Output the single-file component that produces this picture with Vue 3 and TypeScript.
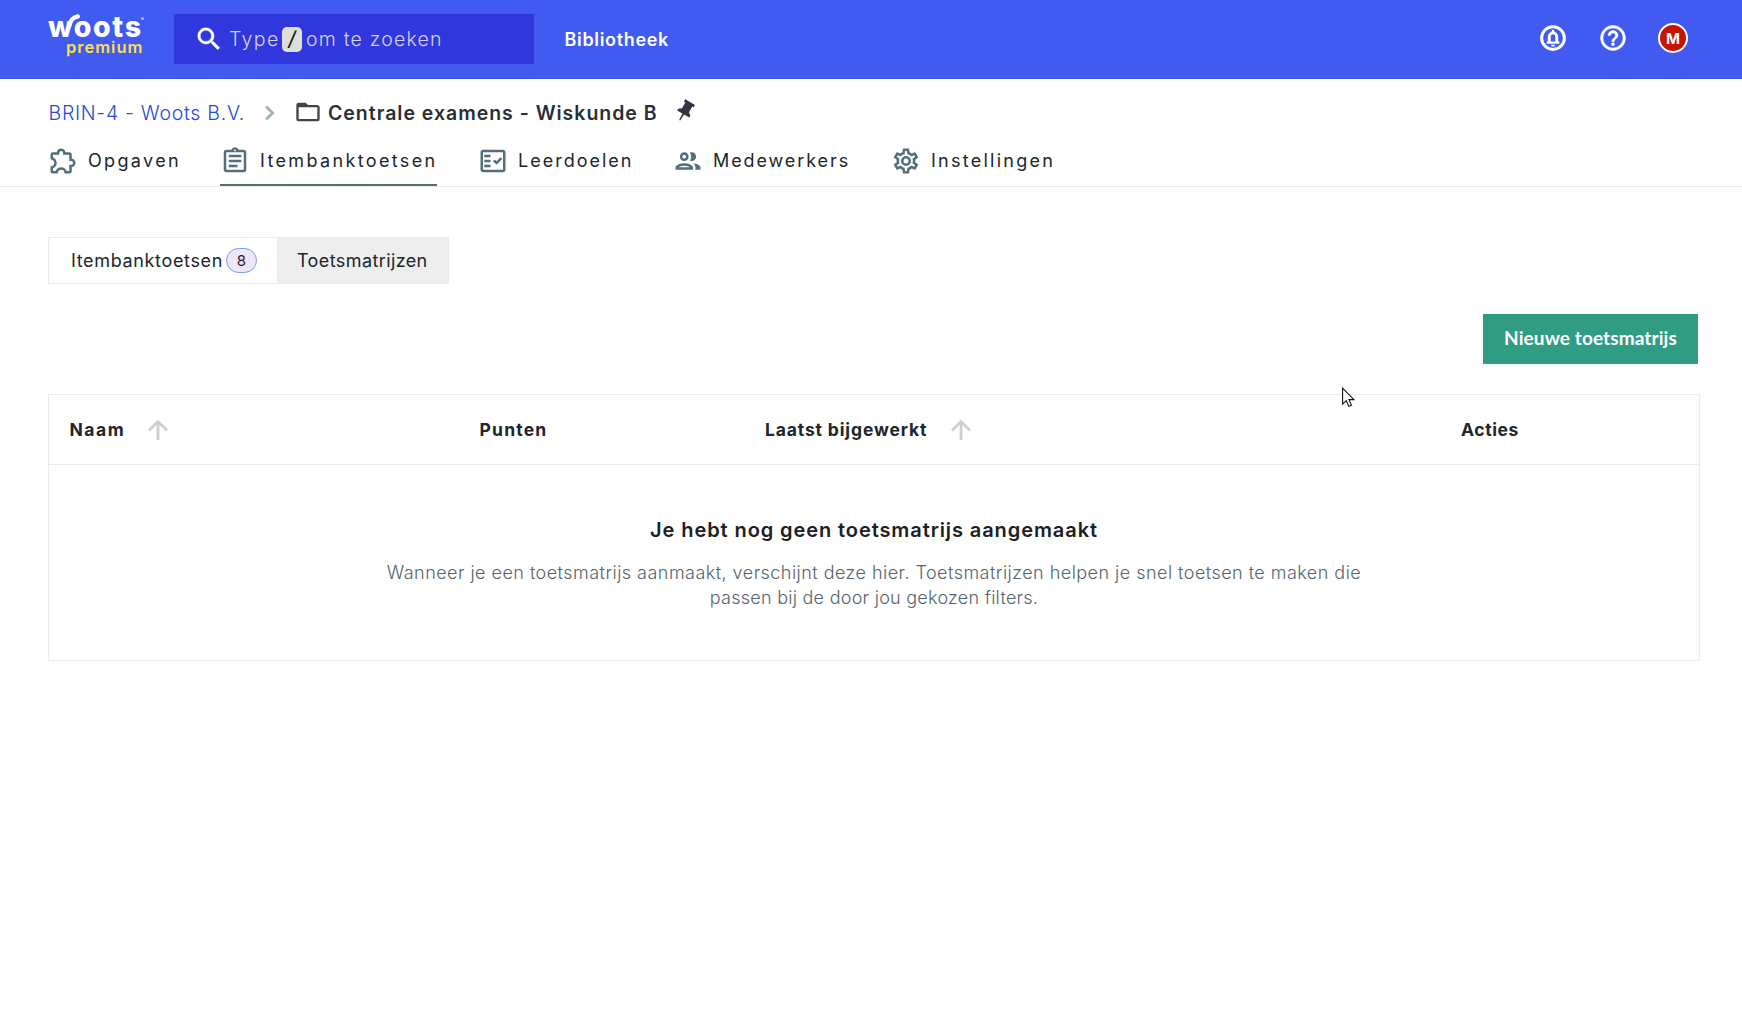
<script setup lang="ts">
interface Tab {
  label: string
  icon: string
  width: number
  spacing: number
  active?: boolean
}

const icons = {
  puzzle: 'M22,13.5C22,15.26 20.7,16.72 19,16.96V20A2,2 0 0,1 17,22H13.2V21.7A2.7,2.7 0 0,0 10.5,19C9,19 7.8,20.21 7.8,21.7V22H4A2,2 0 0,1 2,20V16.2H2.3C3.79,16.2 5,15 5,13.5C5,12 3.79,10.8 2.3,10.8H2V7A2,2 0 0,1 4,5H7.04C7.28,3.3 8.74,2 10.5,2C12.26,2 13.72,3.3 13.96,5H17A2,2 0 0,1 19,7V10.04C20.7,10.28 22,11.74 22,13.5M17,15H18.5A1.5,1.5 0 0,0 20,13.5A1.5,1.5 0 0,0 18.5,12H17V7H12V5.5A1.5,1.5 0 0,0 10.5,4A1.5,1.5 0 0,0 9,5.5V7H4V9.12C5.76,9.8 7,11.5 7,13.5C7,15.5 5.75,17.2 4,17.88V20H6.12C6.8,18.25 8.5,17 10.5,17C12.5,17 14.2,18.25 14.88,20H17V15Z',
  clipboard: 'M7 15h7v2H7zm0-4h10v2H7zm0-4h10v2H7zm12-4h-4.18C14.4 1.84 13.3 1 12 1s-2.4.84-2.82 2H5c-1.1 0-2 .9-2 2v14c0 1.1.9 2 2 2h14c1.1 0 2-.9 2-2V5c0-1.1-.9-2-2-2zm-7-.25c.41 0 .75.34.75.75s-.34.75-.75.75-.75-.34-.75-.75.34-.75.75-.75zM19 19H5V5h14v14z',
  factCheck: 'M20 3H4c-1.1 0-2 .9-2 2v14c0 1.1.9 2 2 2h16c1.1 0 2-.9 2-2V5c0-1.1-.9-2-2-2zm0 16H4V5h16v14zM19.41 10.42L17.99 9l-3.17 3.17-1.41-1.42L12 12.16 14.82 15zM5 7h5v2H5zm0 4h5v2H5zm0 4h5v2H5z',
  people: 'M9 13.75c-2.34 0-7 1.17-7 3.5V19h14v-1.75c0-2.33-4.66-3.5-7-3.5zM4.34 17c.84-.58 2.87-1.25 4.66-1.25s3.82.67 4.66 1.25H4.34zM9 12c1.93 0 3.5-1.57 3.5-3.5S10.93 5 9 5 5.5 6.57 5.5 8.5 7.07 12 9 12zm0-5c.83 0 1.5.67 1.5 1.5S9.83 10 9 10s-1.5-.67-1.5-1.5S8.17 7 9 7zm7.04 6.81c1.16.84 1.96 1.96 1.96 3.44V19h4v-1.75c0-2.02-3.5-3.17-5.96-3.44zM15 12c1.93 0 3.5-1.57 3.5-3.5S16.93 5 15 5c-.54 0-1.04.13-1.5.35.63.89 1 1.98 1 3.15s-.37 2.26-1 3.15c.46.22.96.35 1.5.35z',
  cog: 'M12,8A4,4 0 0,1 16,12A4,4 0 0,1 12,16A4,4 0 0,1 8,12A4,4 0 0,1 12,8M12,10A2,2 0 0,0 10,12A2,2 0 0,0 12,14A2,2 0 0,0 14,12A2,2 0 0,0 12,10M10,22C9.75,22 9.54,21.82 9.5,21.58L9.13,18.93C8.5,18.68 7.96,18.34 7.44,17.94L4.95,18.95C4.73,19.03 4.46,18.95 4.34,18.73L2.34,15.27C2.21,15.05 2.27,14.78 2.46,14.63L4.57,12.97L4.5,12L4.57,11L2.46,9.37C2.27,9.22 2.21,8.95 2.34,8.73L4.34,5.27C4.46,5.05 4.73,4.96 4.95,5.05L7.44,6.05C7.96,5.66 8.5,5.32 9.13,5.07L9.5,2.42C9.54,2.18 9.75,2 10,2H14C14.25,2 14.46,2.18 14.5,2.42L14.87,5.07C15.5,5.32 16.04,5.66 16.56,6.05L19.05,5.05C19.27,4.96 19.54,5.05 19.66,5.27L21.66,8.73C21.79,8.95 21.73,9.22 21.54,9.37L19.43,11L19.5,12L19.43,13L21.54,14.63C21.73,14.78 21.79,15.05 21.66,15.27L19.66,18.73C19.54,18.95 19.27,19.04 19.05,18.95L16.56,17.95C16.04,18.34 15.5,18.68 14.87,18.93L14.5,21.58C14.46,21.82 14.25,22 14,22H10M11.25,4L10.88,6.61C9.68,6.86 8.62,7.5 7.85,8.39L5.44,7.35L4.69,8.65L6.8,10.2C6.4,11.37 6.4,12.64 6.8,13.8L4.68,15.36L5.43,16.66L7.86,15.62C8.63,16.5 9.68,17.14 10.87,17.38L11.24,20H12.76L13.13,17.39C14.32,17.14 15.37,16.5 16.14,15.62L18.57,16.66L19.32,15.36L17.2,13.81C17.6,12.64 17.6,11.37 17.2,10.2L19.31,8.65L18.56,7.35L16.15,8.39C15.38,7.5 14.32,6.86 13.12,6.62L12.75,4H11.25Z',
}

const tabs: Tab[] = [
  { label: 'Opgaven', icon: icons.puzzle, width: 131, spacing: 2.35 },
  { label: 'Itembanktoetsen', icon: icons.clipboard, width: 217, spacing: 2.35, active: true },
  { label: 'Leerdoelen', icon: icons.factCheck, width: 154, spacing: 2.0 },
  { label: 'Medewerkers', icon: icons.people, width: 177, spacing: 1.9 },
  { label: 'Instellingen', icon: icons.cog, width: 164, spacing: 2.25 },
]

const columns = [
  { label: 'Naam', sortable: true, spacing: 1.5 },
  { label: 'Punten', sortable: false, spacing: 1.2 },
  { label: 'Laatst bijgewerkt', sortable: true, spacing: 0.86 },
  { label: 'Acties', sortable: false, spacing: 0.6 },
]
</script>

<template>
  <div class="page">
    <header class="topbar">
      <div class="logo">
        <div class="logo-name">woots<svg class="swash" viewBox="0 0 12 12"><path d="M2 11 C3.5 5.5 5 3.4 10 2.2" fill="none" stroke="#fff" stroke-width="4" stroke-linecap="round" /></svg><i class="reg"></i></div>
        <div class="logo-plan">premium</div>
      </div>
      <div class="search">
        <svg class="icon" viewBox="0 0 24 24"><path stroke="currentColor" stroke-width=".4" d="M9.5,3A6.5,6.5 0 0,1 16,9.5C16,11.11 15.41,12.59 14.44,13.73L14.71,14H15.5L20.5,19L19,20.5L14,15.5V14.71L13.73,14.44C12.59,15.41 11.11,16 9.5,16A6.5,6.5 0 0,1 3,9.5A6.5,6.5 0 0,1 9.5,3M9.5,5C7,5 5,7 5,9.5C5,12 7,14 9.5,14C12,14 14,12 14,9.5C14,7 12,5 9.5,5Z" /></svg>
        <span class="type">Type</span><kbd>/</kbd><span class="rest">om te zoeken</span>
      </div>
      <a class="library">Bibliotheek</a>
      <div class="actions">
        <svg class="icon" viewBox="0 0 24 24"><circle cx="12" cy="12" r="9.1" fill="none" stroke="currentColor" stroke-width="2.4" /><path d="M12 18.9a1.6 1.6 0 0 0 1.6-1.5h-3.2a1.6 1.6 0 0 0 1.6 1.5zM16.2 14.8v-3.6c0-2-1.2-3.7-3.1-4.2v-.5a1.1 1.1 0 0 0-2.2 0v.5c-1.9.5-3.1 2.2-3.1 4.2v3.6H6.9v1.8h10.2v-1.8zm-2.4 0h-3.6v-3.6c0-1.3.6-2.3 1.8-2.3s1.8 1 1.8 2.3z" /></svg>
        <svg class="icon" viewBox="0 0 24 24"><path stroke="currentColor" stroke-width=".4" d="M11,18H13V16H11V18M12,2A10,10 0 0,0 2,12A10,10 0 0,0 12,22A10,10 0 0,0 22,12A10,10 0 0,0 12,2M12,20C7.59,20 4,16.41 4,12C4,7.59 7.59,4 12,4C16.41,4 20,7.59 20,12C20,16.41 16.41,20 12,20M12,6A4,4 0 0,0 8,10H10A2,2 0 0,1 12,8A2,2 0 0,1 14,10C14,12 11,11.75 11,15H13C13,12.75 16,12.5 16,10A4,4 0 0,0 12,6Z" /></svg>
        <span class="avatar">M</span>
      </div>
    </header>

    <nav class="subheader">
      <div class="crumbs">
        <a class="crumb-link">BRIN-4 - Woots B.V.</a>
        <svg class="chevron" viewBox="0 0 12 16"><path d="M2 1.5 L8.6 8 L2 14.5" fill="none" stroke="#9fb1b9" stroke-width="2.7" /></svg>
        <svg class="folder" viewBox="0 0 24 24"><path d="M20,18H4V8H20M20,6H12L10,4H4C2.89,4 2,4.89 2,6V18A2,2 0 0,0 4,20H20A2,2 0 0,0 22,18V8C22,6.89 21.1,6 20,6Z" /></svg>
        <span class="crumb-title">Centrale examens - Wiskunde B</span>
        <svg class="pin" viewBox="0 0 24 24"><path transform="rotate(30 12 12)" d="M16,11V4.4H17.6V1.8H6.4V4.4H8V11L5,13.4V15.6H11L11.4,22.6H12.6L13,15.6H19V13.4Z" /></svg>
      </div>
      <div class="tabs">
        <a v-for="tab in tabs" :key="tab.label" class="tab" :class="{ active: tab.active }" :style="{ width: tab.width + 'px' }">
          <svg class="icon" viewBox="0 0 24 24"><path :d="tab.icon" /></svg>
          <span :style="{ letterSpacing: tab.spacing + 'px' }">{{ tab.label }}</span>
        </a>
      </div>
    </nav>

    <main class="content">
      <div class="switcher">
        <button class="switch items"><span>Itembanktoetsen</span><em class="badge">8</em></button>
        <button class="switch matrices selected">Toetsmatrijzen</button>
      </div>
      <div class="toolbar">
        <button class="create">Nieuwe toetsmatrijs</button>
      </div>
      <section class="table">
        <div class="thead">
          <div v-for="col in columns" :key="col.label" class="th">
            <span :style="{ letterSpacing: col.spacing + 'px', marginRight: -col.spacing + 'px' }">{{ col.label }}</span>
            <svg v-if="col.sortable" class="sort" viewBox="0 0 20 20"><path d="M10 20V2M1 10.6L10 1.6L19 10.6" fill="none" stroke="#cfcfcf" stroke-width="2.8" /></svg>
          </div>
        </div>
        <div class="empty">
          <h3>Je hebt nog geen toetsmatrijs aangemaakt</h3>
          <p>Wanneer je een toetsmatrijs aanmaakt, verschijnt deze hier. Toetsmatrijzen helpen je snel toetsen te maken die<br /><span class="second">passen bij de door jou gekozen filters.</span></p>
        </div>
      </section>
    </main>

    <svg class="cursor" viewBox="0 0 13 21"><path d="M.6 1.2V17L4.3 13.6L6.8 19.4L9.4 18.3L7 12.6H11.9Z" fill="#fff" stroke="#111" stroke-width="1.1" /></svg>
  </div>
</template>

<style>
body {
  background: #fff;
}
</style>

<style scoped>
.page {
  position: relative;
  box-sizing: border-box;
  height: 1024px;
  overflow: hidden;
  font-family: Inter, Montserrat, sans-serif;
  color: #20262b;
  background: #fff;
}
.page * {
  box-sizing: border-box;
}
.icon {
  width: 30px;
  height: 30px;
  fill: currentColor;
  flex: none;
}
.topbar {
  display: flex;
  height: 79px;
  padding: 0 0 0 48px;
  color: #fff;
  background: #415af0;
  border-bottom: 1px solid #3a52de;
}
.logo {
  width: 126px;
  padding-top: 15px;
}
.logo-name {
  position: relative;
  height: 24px;
  font-size: 28.5px;
  line-height: 24px;
  font-weight: 800;
  letter-spacing: 1.6px;
  white-space: nowrap;
}
.swash {
  position: absolute;
  left: 19px;
  top: -1px;
  width: 13px;
  height: 13px;
}
.reg {
  position: absolute;
  left: 93px;
  top: 2px;
  width: 3px;
  height: 3px;
  border-radius: 50%;
  background: #a9b4f8;
}
.logo-plan {
  padding-left: 18px;
  font-size: 16.5px;
  line-height: 16px;
  font-weight: 600;
  letter-spacing: 1px;
  color: #fde047;
  white-space: nowrap;
}
.search {
  display: flex;
  align-items: center;
  width: 360px;
  height: 50px;
  margin-top: 14px;
  padding-left: 20px;
  background: #3038dd;
  color: #d3d4ee;
  font-size: 19.5px;
  font-weight: 300;
  white-space: nowrap;
}
.search .icon {
  color: #fff;
}
.type {
  width: 53px;
  margin-left: 5px;
  letter-spacing: 1.4px;
}
kbd {
  width: 20px;
  height: 25px;
  margin-top: 1px;
  border-radius: 5px;
  background: #dfdfda;
  color: #222;
  font-family: Inter, sans-serif;
  font-size: 20px;
  font-style: italic;
  font-weight: 500;
  line-height: 24px;
  text-align: center;
}
.rest {
  margin-left: 4px;
  letter-spacing: 1.2px;
}
.library {
  margin-left: 30.5px;
  line-height: 79px;
  font-size: 18px;
  font-weight: 600;
  letter-spacing: 0.66px;
}
.actions {
  display: flex;
  align-items: center;
  gap: 30px;
  height: 76px;
  margin-left: auto;
  padding-right: 54px;
}
.avatar {
  width: 30px;
  height: 30px;
  border: 2px solid #fff;
  border-radius: 50%;
  background: #c41600;
  font-size: 15px;
  line-height: 27px;
  font-weight: 700;
  text-align: center;
}
.subheader {
  height: 108px;
  padding: 20px 0 0 48px;
  border-bottom: 1px solid #eaeaea;
}
.crumbs {
  display: flex;
  align-items: center;
  height: 28px;
  font-size: 19.5px;
  white-space: nowrap;
}
.crumb-link {
  width: 216px;
  padding-left: 0.5px;
  font-weight: 300;
  letter-spacing: 0.72px;
  color: #2448e0;
}
.chevron {
  width: 12px;
  height: 16px;
}
.folder {
  width: 28px;
  height: 28px;
  margin: -3px 0 0 18px;
  fill: #3d464d;
}
.crumb-title {
  width: 336px;
  margin-left: 6px;
  font-weight: 600;
  letter-spacing: 0.98px;
  color: #2a2f36;
}
.pin {
  width: 24px;
  height: 24px;
  margin: -4px 0 0 9px;
  fill: #2f3640;
}
.tabs {
  display: flex;
  gap: 41px;
  margin-top: 10px;
}
.tab {
  display: flex;
  align-items: center;
  gap: 10px;
  height: 49px;
  border-bottom: 2px solid transparent;
  font-size: 18px;
  white-space: nowrap;
}
.tab .icon {
  color: #546e7a;
}
.tab.active {
  border-bottom-color: #546e6f;
}
.content {
  padding: 50px 42px 0 48px;
}
.switcher {
  display: flex;
  width: 401px;
  height: 47px;
}
.switch {
  display: flex;
  align-items: center;
  margin: 0;
  padding: 0 0 1px 19px;
  border: 1px solid #ebebeb;
  background: #fff;
  color: inherit;
  font: 400 18px/25px Inter, sans-serif;
  white-space: nowrap;
}
.items {
  width: 229px;
  letter-spacing: 0.66px;
  border-right: 0;
}
.items span {
  width: 158px;
}
.matrices {
  flex: 1;
  letter-spacing: 0.4px;
}
.selected {
  background: #eee;
}
.badge {
  width: 31px;
  height: 25px;
  border: 1px solid #7e9cf0;
  border-radius: 13px;
  background: #eee6f9;
  font-size: 15px;
  font-style: normal;
  line-height: 23px;
  letter-spacing: 0;
  text-align: center;
}
.toolbar {
  display: flex;
  justify-content: flex-end;
  margin-top: 30px;
  padding-right: 2px;
}
.create {
  width: 215px;
  height: 50px;
  margin: 0;
  padding: 0 0 2px;
  border: 0;
  background: #309c83;
  color: #fff;
  font: 700 19px/48px Lato, sans-serif;
  letter-spacing: 0.1px;
}
.table {
  height: 267px;
  margin-top: 30px;
  border: 1px solid #ebebeb;
}
.thead {
  display: grid;
  grid-template-columns: 410px 285.5px 696px 1fr;
  height: 70px;
  padding-left: 20.5px;
  border-bottom: 1px solid #ebebeb;
}
.th {
  display: flex;
  align-items: center;
  font-size: 17.5px;
  font-weight: 700;
  white-space: nowrap;
}
.sort {
  width: 20px;
  height: 20px;
  margin-left: 24.5px;
}
.empty {
  padding-top: 51px;
  text-align: center;
}
h3 {
  margin: 0 0 16px;
  font-size: 20px;
  line-height: 28px;
  font-weight: 600;
  letter-spacing: 0.91px;
  color: #1b2025;
}
p {
  margin: 0;
  font-size: 18px;
  line-height: 25px;
  font-weight: 300;
  letter-spacing: 0.463px;
  color: #56646d;
}
.second {
  letter-spacing: 0.26px;
}
.cursor {
  position: absolute;
  left: 1342px;
  top: 387px;
  width: 13px;
  height: 21px;
}
</style>
